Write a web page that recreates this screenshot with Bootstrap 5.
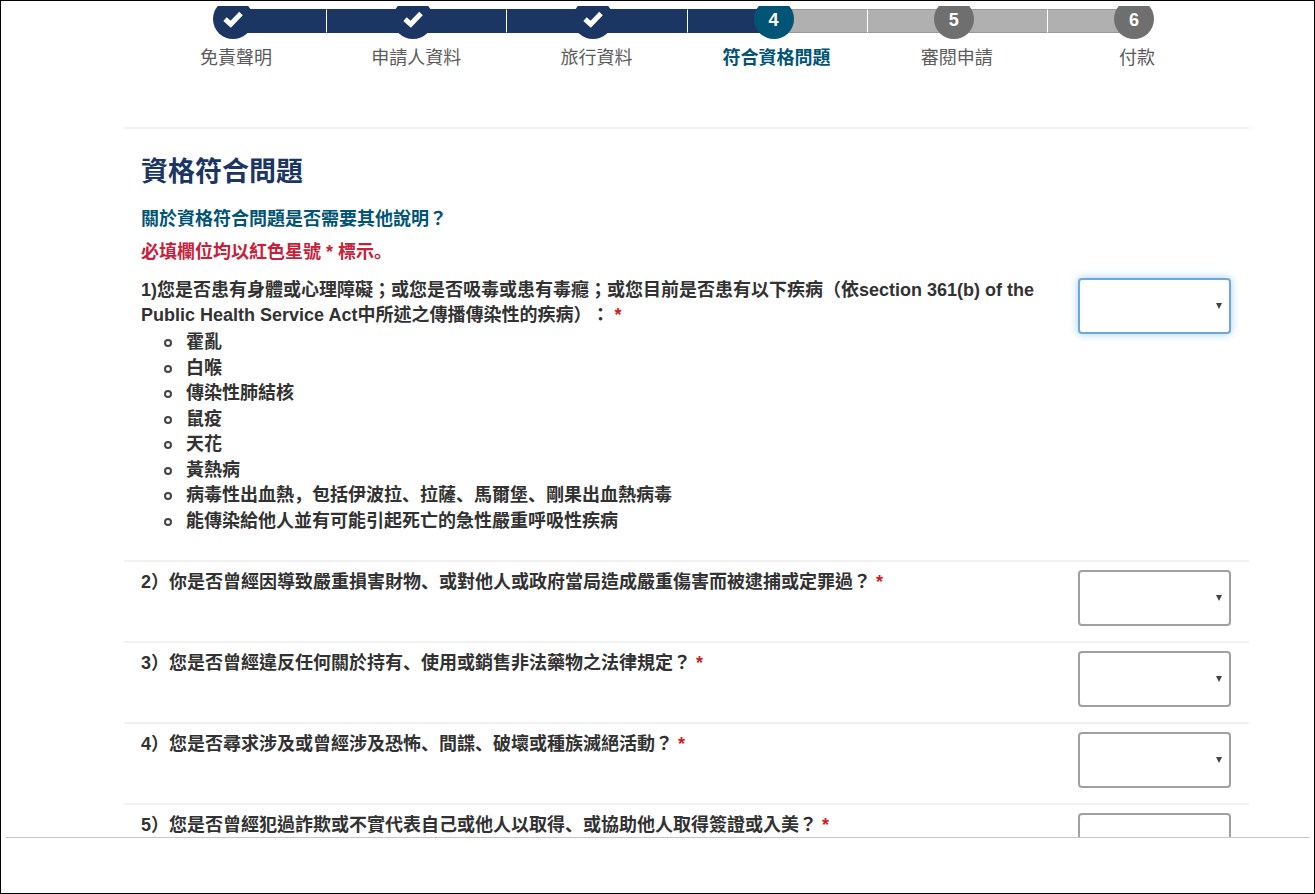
<!DOCTYPE html>
<html lang="zh-TW">
<head>
<meta charset="utf-8">
<meta name="viewport" content="width=device-width, initial-scale=1">
<title>資格符合問題</title>
<link href="https://cdn.jsdelivr.net/npm/bootstrap@5.3.0/dist/css/bootstrap.min.css" rel="stylesheet">
<style>
  body {
    font-family: "Liberation Sans", "Noto Sans CJK TC", sans-serif;
    font-size: 18px;
    line-height: 25px;
    text-spacing-trim: space-all;
    color: #323232;
    background: #fff;
  }
  .window-frame { height: 100vh; border: 1px solid #000; padding: 5px 5px 0; }
  .page-view { min-height: 0; border-bottom: 1px solid #c4c4c4; }
  .page-foot { height: 55px; }
  .page-body { padding: 0 60px 0 118px; }

  /* progress steps */
  .steps { margin: -7px 22px 0; padding: 0 0 56px; }
  .step { flex: 1 1 0; min-width: 0; text-align: center; color: #5b5b5b; }
  .step-bar { height: 24px; margin-top: 4px; background: #b0b0b0; border: solid #999; border-width: 1px 0; }
  .step-bar.before { flex: 67 1 0; border-left: 1px solid #fff; }
  .step-bar.after { flex: 73 1 0; }
  .step-bar.filled { background: #1c3664; border-top-color: #1c3664; border-bottom-color: #1c3664; }
  .step:first-child .before, .step:last-child .after { visibility: hidden; }
  .step-dot {
    width: 40px; height: 40px; margin: 0 -12px; padding-top: 2px; z-index: 1;
    border-radius: 50%; background: #6f6f6f; color: #fff; font-weight: 700;
  }
  .step.done .step-dot { background: #1c3664; }
  .step.current .step-dot { background: #005475; }
  .step.current .step-name { color: #005475; font-weight: 700; }
  .step-name { margin-top: 7px; }

  /* questions */
  .section-rule { border-top: 2px solid #f1f1f1; }
  .intro { padding: 24px 17px 0; }
  .intro h1 { font-size: 27px; line-height: 38px; font-weight: 700; color: #1c3664; margin: 0 0 16px; }
  .help-link { color: #005475; font-weight: 700; text-decoration: none; }
  .required-note { color: #c8203a; font-weight: 700; margin: 8px 0 0; }
  .question { padding: 8px 18px 15px 17px; gap: 15px; font-weight: 700; }
  .question.first { padding: 13px 18px 26px 17px; }
  .question .star { color: #cd2026; }
  .diseases { list-style: none; padding-left: 45px; margin: 2px 0 0; min-height: 204px; grid-auto-rows: 1fr; }
  .diseases li::before {
    content: ""; display: inline-block; width: 8px; height: 8px;
    margin: 0 14px 0 -22px; vertical-align: 1px;
    border: 2px solid #444; border-radius: 50%;
  }
  .answer {
    width: 153px; height: 56px; flex: none;
    border: 2px solid #a0a0a0; border-radius: 4px; box-shadow: none;
    background-image: url("data:image/svg+xml,%3Csvg xmlns='http://www.w3.org/2000/svg' viewBox='0 0 6 6'%3E%3Cpath d='M0 0h6L3 6z' fill='%23444'/%3E%3C/svg%3E");
    background-size: 6px 6px;
    background-position: right 7px center;
  }
  .answer.active, .answer:focus { border-color: #6fa8d6; box-shadow: 0 0 8px rgba(102, 175, 233, .6); }
</style>
</head>
<body>
<div class="window-frame d-flex flex-column">
  <main class="page-view flex-grow-1 overflow-hidden">
    <div class="page-body">
      <ol class="steps list-unstyled d-flex">
        <li class="step done">
          <div class="d-flex align-items-center">
            <span class="step-bar before filled"></span>
            <span class="step-dot d-flex align-items-center justify-content-center"><svg width="20" height="18" viewBox="0 0 20 18" aria-hidden="true"><path d="M2 8.2 7.7 13.2 18 2.6" fill="none" stroke="#fff" stroke-width="5"/></svg></span>
            <span class="step-bar after filled"></span>
          </div>
          <div class="step-name">免責聲明</div>
        </li>
        <li class="step done">
          <div class="d-flex align-items-center">
            <span class="step-bar before filled"></span>
            <span class="step-dot d-flex align-items-center justify-content-center"><svg width="20" height="18" viewBox="0 0 20 18" aria-hidden="true"><path d="M2 8.2 7.7 13.2 18 2.6" fill="none" stroke="#fff" stroke-width="5"/></svg></span>
            <span class="step-bar after filled"></span>
          </div>
          <div class="step-name">申請人資料</div>
        </li>
        <li class="step done">
          <div class="d-flex align-items-center">
            <span class="step-bar before filled"></span>
            <span class="step-dot d-flex align-items-center justify-content-center"><svg width="20" height="18" viewBox="0 0 20 18" aria-hidden="true"><path d="M2 8.2 7.7 13.2 18 2.6" fill="none" stroke="#fff" stroke-width="5"/></svg></span>
            <span class="step-bar after filled"></span>
          </div>
          <div class="step-name">旅行資料</div>
        </li>
        <li class="step current" aria-current="step">
          <div class="d-flex align-items-center">
            <span class="step-bar before filled"></span>
            <span class="step-dot d-flex align-items-center justify-content-center">4</span>
            <span class="step-bar after"></span>
          </div>
          <div class="step-name">符合資格問題</div>
        </li>
        <li class="step">
          <div class="d-flex align-items-center">
            <span class="step-bar before"></span>
            <span class="step-dot d-flex align-items-center justify-content-center">5</span>
            <span class="step-bar after"></span>
          </div>
          <div class="step-name">審閱申請</div>
        </li>
        <li class="step">
          <div class="d-flex align-items-center">
            <span class="step-bar before"></span>
            <span class="step-dot d-flex align-items-center justify-content-center">6</span>
            <span class="step-bar after"></span>
          </div>
          <div class="step-name">付款</div>
        </li>
      </ol>

      <form>
        <div class="section-rule intro">
          <h1>資格符合問題</h1>
          <a class="help-link d-block" href="#">關於資格符合問題是否需要其他說明？</a>
          <p class="required-note">必填欄位均以紅色星號 * 標示<span lang="ja">。</span></p>
        </div>

        <div class="question first d-flex align-items-start">
          <div class="flex-grow-1">
            <label for="q1">1)您是否患有身體或心理障礙；或您是否吸毒或患有毒癮；或您目前是否患有以下疾病（依section 361(b) of the Public Health Service Act中所述之傳播傳染性的疾病）： <span class="star">*</span></label>
            <ul class="diseases d-grid">
              <li>霍亂</li>
              <li>白喉</li>
              <li>傳染性肺結核</li>
              <li>鼠疫</li>
              <li>天花</li>
              <li>黃熱病</li>
              <li>病毒性出血熱<span lang="ja">，</span>包括伊波拉<span lang="ja">、</span>拉薩<span lang="ja">、</span>馬爾堡<span lang="ja">、</span>剛果出血熱病毒</li>
              <li>能傳染給他人並有可能引起死亡的急性嚴重呼吸性疾病</li>
            </ul>
          </div>
          <select id="q1" class="form-select answer active"><option></option><option>是</option><option>否</option></select>
        </div>

        <div class="question section-rule d-flex align-items-start">
          <label class="flex-grow-1" for="q2">2）你是否曾經因導致嚴重損害財物<span lang="ja">、</span>或對他人或政府當局造成嚴重傷害而被逮捕或定罪過？ <span class="star">*</span></label>
          <select id="q2" class="form-select answer"><option></option><option>是</option><option>否</option></select>
        </div>
        <div class="question section-rule d-flex align-items-start">
          <label class="flex-grow-1" for="q3">3）您是否曾經違反任何關於持有<span lang="ja">、</span>使用或銷售非法藥物之法律規定？ <span class="star">*</span></label>
          <select id="q3" class="form-select answer"><option></option><option>是</option><option>否</option></select>
        </div>
        <div class="question section-rule d-flex align-items-start">
          <label class="flex-grow-1" for="q4">4）您是否尋求涉及或曾經涉及恐怖<span lang="ja">、</span>間諜<span lang="ja">、</span>破壞或種族滅絕活動？ <span class="star">*</span></label>
          <select id="q4" class="form-select answer"><option></option><option>是</option><option>否</option></select>
        </div>
        <div class="question section-rule d-flex align-items-start">
          <label class="flex-grow-1" for="q5">5）您是否曾經犯過詐欺或不實代表自己或他人以取得<span lang="ja">、</span>或協助他人取得簽證或入美？ <span class="star">*</span></label>
          <select id="q5" class="form-select answer"><option></option><option>是</option><option>否</option></select>
        </div>
      </form>
    </div>
  </main>
  <footer class="page-foot flex-shrink-0"></footer>
</div>
<script src="https://cdn.jsdelivr.net/npm/bootstrap@5.3.0/dist/js/bootstrap.bundle.min.js"></script>
</body>
</html>
